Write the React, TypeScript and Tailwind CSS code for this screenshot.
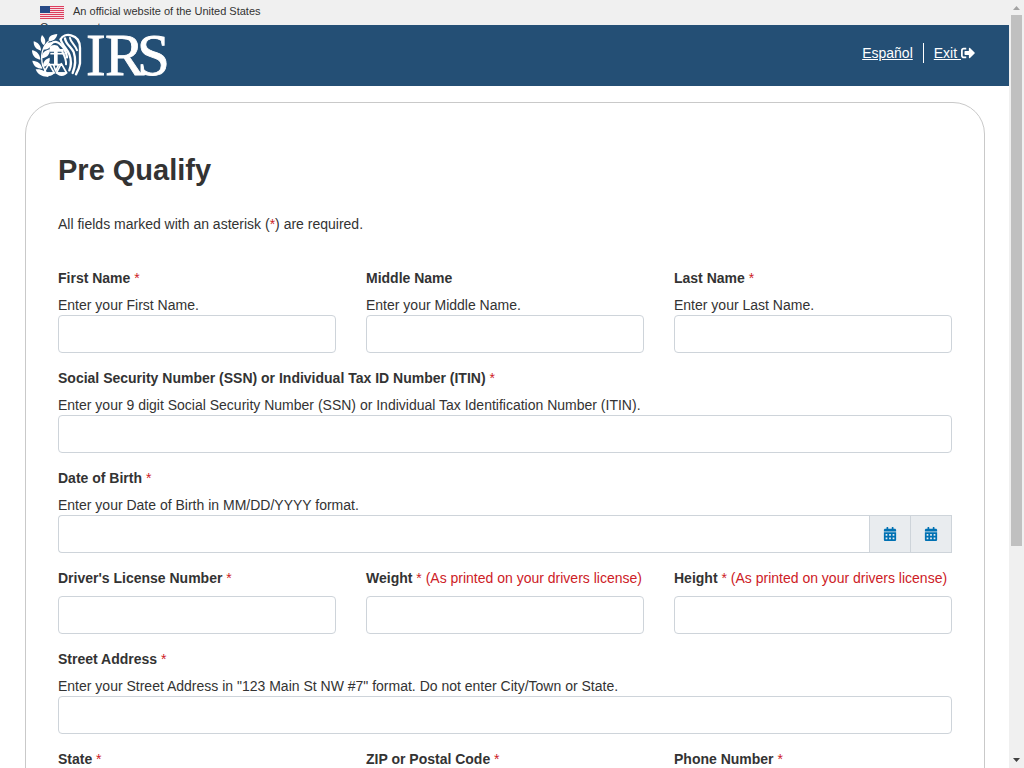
import React from "react";
import { FaCalendarAlt, FaSignOutAlt } from "react-icons/fa";

const inputClass =
  "block h-[38px] w-full rounded border border-[#ced4da] bg-white px-3 text-sm text-[#333333] outline-none";

type FieldProps = {
  id: string;
  label: string;
  required?: boolean;
  note?: string;
  hint?: string;
  children?: React.ReactNode;
};

function Field({ id, label, required, note, hint, children }: FieldProps) {
  return (
    <div className="min-w-0">
      <label htmlFor={id} className="block whitespace-nowrap text-sm leading-5 font-bold">
        {label}
        {required && <span className="font-normal text-[#cd2026]"> *{note ? ` ${note}` : ""}</span>}
      </label>
      {hint ? (
        <p id={`${id}-hint`} className="mt-[7px] text-sm leading-5">
          {hint}
        </p>
      ) : (
        <div className="h-2" />
      )}
      {children ?? (
        <input id={id} type="text" className={inputClass} aria-describedby={hint ? `${id}-hint` : undefined} />
      )}
    </div>
  );
}

function Flag() {
  return (
    <svg viewBox="0 0 24 13" className="mr-[9px] inline-block h-[13px] w-6 align-[-4px]" aria-hidden="true">
      <rect width="24" height="13" fill="#f7dfe5" />
      {[0, 2, 4, 6, 8, 10, 12].map((y) => (
        <rect key={y} y={y} width="24" height="1" fill="#dc3e5e" />
      ))}
      <rect width="10" height="7" fill="#284a86" />
    </svg>
  );
}

function Logo() {
  return (
    <svg viewBox="0 0 138 46" className="h-[46px] w-[138px]" role="img" aria-label="IRS">
      <g transform="translate(0 1) scale(0.3333)" fill="#fff">
        <path d="M50 22C48 8 58 1 76 0C74 14 64 22 50 22Z" />
        <path d="M36 34C25 26 24 14 30 3C40 12 43 24 36 34Z" />
        <path d="M5 22C18 25 27 35 27 50C12 47 4 36 5 22Z" />
        <path d="M0 49C14 51 24 61 25 77C9 75 0 64 0 49Z" />
        <path d="M1 80C17 81 28 89 31 104C15 104 3 95 1 80Z" />
        <path d="M11 106C28 104 41 111 50 128C32 130 17 122 11 106Z" />
        <path d="M34 47C34 33 44 25 61 24C59 38 50 47 34 47Z" />
        <path d="M29 73C29 58 37 49 54 46C54 61 46 71 29 73Z" />
        <path d="M34 99C31 86 38 76 53 71C55 84 48 95 34 99Z" />
        <path d="M50 22C31 39 25 65 32 95L48 127" fill="none" stroke="#fff" strokeWidth="4" />
        <path d="M53 40C57 32 68 31 77 35L84 45H95V53H77V94H66V53H53Z" />
        <path d="M55 59H98" stroke="#fff" strokeWidth="5" />
        <g fill="none" stroke="#fff" strokeWidth="5" strokeLinejoin="round">
          <path d="M51 89L35 117H67ZM88 89L73 117H104Z" />
          <path d="M51 92H88M65 94L71 111L79 94" />
        </g>
        <path d="M33 115H67C64 130 37 130 33 115ZM72 115H106C102 130 76 130 72 115Z" />
        <g fill="none" stroke="#fff" strokeLinecap="round">
          <path d="M86 16C91 5 104 1 117 4C138 9 144 23 144 42V88C142 102 137 112 132 121" strokeWidth="7" />
          <path d="M58 29C66 20 78 23 85 31C96 40 103 54 105 70" strokeWidth="7" />
          <path d="M86 16C90 34 105 44 112 61C117 74 119 92 112 109" strokeWidth="7" />
          <path d="M99 13C101 30 118 39 125 54C131 72 130 98 122 117" strokeWidth="7" />
          <path d="M114 12C115 24 130 32 135 49" strokeWidth="6" />
          <path d="M91 53C98 66 103 79 102 91" strokeWidth="6" />
        </g>
      </g>
      <g fill="#fff" stroke="#fff" strokeWidth="0.8" fontFamily="'Liberation Serif', serif" fontSize="59">
        <text x="54" y="42">I</text>
        <text x="73" y="42">R</text>
        <text x="105" y="42">S</text>
      </g>
    </svg>
  );
}

function Scrollbar() {
  return (
    <div className="flex w-[15px] shrink-0 flex-col items-center bg-[#f0f0f0]" aria-hidden="true">
      <svg viewBox="0 0 15 15" className="size-[15px] shrink-0">
        <path d="M7.5 6L11 10H4Z" fill="#a3a3a3" />
      </svg>
      <div className="min-h-0 w-full flex-1 px-[2px]">
        <div className="h-[72%] bg-[#c0c0c0]" />
      </div>
      <svg viewBox="0 0 15 15" className="size-[15px] shrink-0">
        <path d="M4 5H11L7.5 9Z" fill="#404040" />
      </svg>
    </div>
  );
}

export default function App() {
  return (
    <div className="flex h-screen overflow-hidden bg-white font-['Liberation_Sans',Arial,sans-serif] text-sm text-[#333333]">
      <div className="min-w-0 flex-1 overflow-hidden">
        <div className="h-[25px] overflow-hidden bg-[#f0f0f0] pt-[3px] pl-10">
          <p className="w-60 text-[11px] leading-4">
            <Flag />
            An official website of the United States Government
          </p>
        </div>
        <header className="flex h-[61px] items-center justify-between bg-[#244f75] pr-[34px] pl-8 text-white">
          <Logo />
          <nav className="flex items-center pb-[5px]">
            <a href="#es" className="border-r border-white pr-[10px] leading-5 underline">
              Español
            </a>
            <a href="#exit" className="pl-[10px] leading-5 underline">
              Exit <FaSignOutAlt className="inline size-[14px] align-[-2px]" />
            </a>
          </nav>
        </header>
        <main className="mt-4 mr-6 ml-[25px] rounded-[32px] border border-[#c9c9c9] px-8 pt-[47px] pb-8">
          <h1 className="text-[29px] leading-10 font-bold">Pre Qualify</h1>
          <p className="mt-6 leading-5">
            All fields marked with an asterisk (<span className="text-[#cd2026]">*</span>) are required.
          </p>
          <form className="mt-[34px] flex flex-col gap-[15px]">
            <div className="grid grid-cols-3 gap-x-[30px]">
              <Field id="first-name" label="First Name" required hint="Enter your First Name." />
              <Field id="middle-name" label="Middle Name" hint="Enter your Middle Name." />
              <Field id="last-name" label="Last Name" required hint="Enter your Last Name." />
            </div>
            <Field
              id="ssn"
              label="Social Security Number (SSN) or Individual Tax ID Number (ITIN)"
              required
              hint="Enter your 9 digit Social Security Number (SSN) or Individual Tax Identification Number (ITIN)."
            />
            <Field id="dob" label="Date of Birth" required hint="Enter your Date of Birth in MM/DD/YYYY format.">
              <div className="flex">
                <input
                  id="dob"
                  type="text"
                  aria-describedby="dob-hint"
                  className="h-[38px] min-w-0 flex-1 rounded-l border border-r-0 border-[#ced4da] bg-white px-3 outline-none"
                />
                {["Open calendar", "Choose date"].map((name, i) => (
                  <button
                    key={name}
                    type="button"
                    aria-label={name}
                    className={`flex h-[38px] items-center justify-center border border-[#ced4da] bg-[#e9ecef] text-[#0071b3] ${
                      i === 0 ? "w-[41px] border-r-0" : "w-[42px]"
                    }`}
                  >
                    <FaCalendarAlt className="size-[14px]" />
                  </button>
                ))}
              </div>
            </Field>
            <div className="grid grid-cols-3 gap-x-[30px]">
              <Field id="license" label="Driver's License Number" required />
              <Field id="weight" label="Weight" required note="(As printed on your drivers license)" />
              <Field id="height" label="Height" required note="(As printed on your drivers license)" />
            </div>
            <Field
              id="street"
              label="Street Address"
              required
              hint={'Enter your Street Address in "123 Main St NW #7" format. Do not enter City/Town or State.'}
            />
            <div className="grid grid-cols-3 gap-x-[30px]">
              <Field id="state" label="State" required />
              <Field id="zip" label="ZIP or Postal Code" required />
              <Field id="phone" label="Phone Number" required />
            </div>
          </form>
        </main>
      </div>
      <Scrollbar />
    </div>
  );
}
